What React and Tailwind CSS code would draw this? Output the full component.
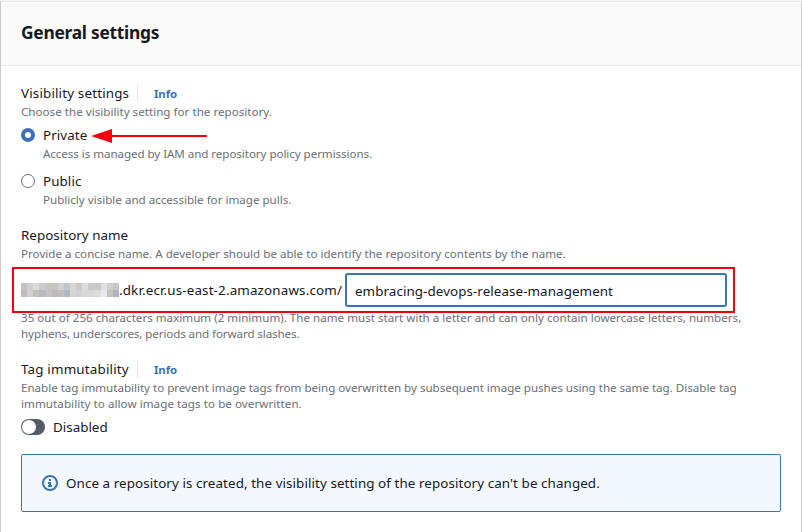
import React from "react";

const MOSAIC_TOP = ["#c4c2c1", "#d0cfcf", "#dadada", "#cbcbca", "#c7c4c2", "#c5c5c6", "#d2d1d2", "#c2c5cf", "#d9d6d0", "#c9cacd", "#dcdce0", "#c9c9ca", "#c8c8c9", "#e1e0e0", "#cfcfd2", "#c3c7ca"];
const MOSAIC_BOTTOM = ["#c1bcb9", "#d0d0d5", "#c6c0bc", "#b7b9c1", "#c5c3c2", "#bdb9b6", "#c0bdbb", "#b3b7c4", "#d6d3d3", "#d2d1d2", "#d9d8da", "#dad7d9", "#dedbdb", "#e8e9ec", "#c5c1be", "#b1b4bf"];

function Label({ children, className = "" }) {
  return <span className={`whitespace-nowrap text-[13.4px] leading-[18px] text-[#16191f] ${className}`}>{children}</span>;
}

function Hint({ children, className = "" }) {
  return <div className={`whitespace-nowrap text-[11.6px] leading-4 text-[#687078] ${className}`}>{children}</div>;
}

function InfoLink() {
  return (
    <a className="ml-2 flex h-[18px] items-center border-l border-[#e4e7e7] pl-4 pt-[2px] text-[11.4px] font-bold leading-[18px] text-[#3b73bb]">
      <span className="tracking-[-0.1px]">Info</span>
    </a>
  );
}

function Mosaic() {
  return (
    <div className="h-[14px] w-[98px] shrink-0 overflow-hidden">
      {[MOSAIC_TOP, MOSAIC_BOTTOM].map((row, i) => (
        <div key={i} className="flex h-[7px]">
          {row.map((c, j) => (
            <div key={j} className="w-[6px] grow" style={{ backgroundColor: c }} />
          ))}
        </div>
      ))}
    </div>
  );
}

export default function App() {
  return (
    <div className="h-[532px] w-[802px] overflow-hidden bg-[#f2f3f3] pt-px font-['Noto_Sans',sans-serif]">
      <div className="h-[531px] border-x border-t border-x-[#c9ccd0] border-t-[#eaeded] bg-white">
        <header className="flex h-16 items-center border-b border-[#e6e8e8] bg-[#fafafa] pb-[3px] pl-5">
          <h2 className="whitespace-nowrap text-[17.4px] font-bold leading-[22px] tracking-[-0.28px] text-[#16191f]">General settings</h2>
        </header>

        <main className="flex flex-col px-5 pt-[18px]">
          <div className="flex h-[18px] items-center">
            <Label className="w-[108px] tracking-[0.16px]">Visibility settings</Label>
            <InfoLink />
          </div>
          <Hint className="mt-0.5 tracking-[0.02px]">Choose the visibility setting for the repository.</Hint>

          <div className="mt-[6px] flex h-[18px] items-center">
            <span className="flex size-[14px] items-center justify-center rounded-full bg-[#3b73bb]">
              <span className="size-[6px] rounded-full bg-white" />
            </span>
            <Label className="ml-2 w-[44px] tracking-[0.09px]">Private</Label>
            <svg className="ml-[4px] mt-[2px] h-[14px] w-[116px]" viewBox="0 0 116 14">
              <path d="M0 7 21 0V14Z" fill="#f7000b" />
              <path d="M20 7H116" stroke="#f7000b" strokeWidth="2" />
            </svg>
          </div>
          <Hint className="ml-[22px] mt-0.5 tracking-[-0.06px]">Access is managed by IAM and repository policy permissions.</Hint>

          <div className="mt-[10px] flex h-[18px] items-center">
            <span className="size-[14px] rounded-full border border-[#687078] bg-white" />
            <Label className="ml-2 tracking-[0.08px]">Public</Label>
          </div>
          <Hint className="ml-[22px] mt-0.5">Publicly visible and accessible for image pulls.</Hint>

          <Label className="mt-[18px] tracking-[0.03px]">Repository name</Label>
          <Hint className="mt-[2px] tracking-[0.01px]">Provide a concise name. A developer should be able to identify the repository contents by the name.</Hint>

          <div className="-ml-[9px] mt-[5px] flex h-[46px] w-[723px] items-center border-2 border-[#f7000b] pl-[7px]">
            <Mosaic />
            <Label className="w-[226px] tracking-[0.15px]">.dkr.ecr.us-east-2.amazonaws.com/</Label>
            <div className="flex h-[34px] w-[382px] items-center rounded-[3px] border-2 border-[#3b73bb] bg-white pl-2 pt-[2px]">
              <Label className="tracking-[0.07px]">embracing-devops-release-management</Label>
            </div>
          </div>
          <Hint className="-mt-[3px] tracking-[0.01px]">
            35 out of 256 characters maximum (2 minimum). The name must start with a letter and can only contain lowercase letters, numbers,
          </Hint>
          <Hint className="tracking-[-0.1px]">hyphens, underscores, periods and forward slashes.</Hint>

          <div className="mt-[18px] flex h-[18px] items-center">
            <Label className="w-[108px] tracking-[0.18px]">Tag immutability</Label>
            <InfoLink />
          </div>
          <Hint className="mt-[2px] tracking-[-0.015px]">
            Enable tag immutability to prevent image tags from being overwritten by subsequent image pushes using the same tag. Disable tag
          </Hint>
          <Hint className="tracking-[0.06px]">immutability to allow image tags to be overwritten.</Hint>

          <div className="mt-[6px] flex h-[18px] items-center">
            <span className="flex h-4 w-6 items-center rounded-full bg-[#545b64] pl-[1px]">
              <span className="size-[14px] rounded-full bg-white" />
            </span>
            <Label className="ml-2">Disabled</Label>
          </div>

          <div className="mt-[18px] flex h-[58px] w-[760px] items-center rounded-[2px] border border-[#3b73bb] bg-[#f3f8fe] pl-5">
            <svg className="size-4" viewBox="0 0 16 16" fill="none" stroke="#3b73bb" strokeWidth="2">
              <circle cx="8" cy="8" r="7" />
              <path d="M7 5H9M6 8H9M8 7V11M6 11H10" />
            </svg>
            <Label className="ml-2 tracking-[0.08px]">Once a repository is created, the visibility setting of the repository can't be changed.</Label>
          </div>
        </main>
      </div>
    </div>
  );
}
